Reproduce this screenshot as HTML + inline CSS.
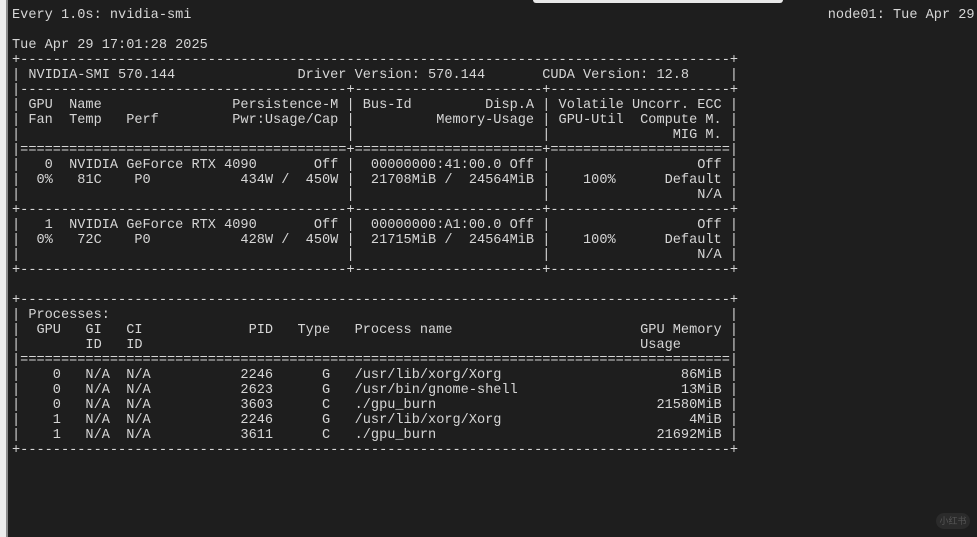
<!DOCTYPE html>
<html><head><meta charset="utf-8"><style>
html,body{margin:0;padding:0}
body{width:977px;height:537px;background:#1e1e1e;position:relative;overflow:hidden;font-family:"Liberation Mono",monospace;font-size:13.6px;color:#d6d6d6}
.side{position:absolute;left:0;top:0;width:6px;height:537px;background:#ececec;border-right:2px solid #8a8a8a}
.topbar{position:absolute;left:533px;top:0;width:250px;height:3px;background:#e8e8e8;border-radius:0 0 4px 4px}
.scr{position:absolute;left:12px;top:8px;width:965px;height:529px;overflow:hidden}
.l{position:relative;height:15px;line-height:15px}
i{position:absolute;top:0;font-style:normal;white-space:pre}
.f{overflow:hidden}
.wm{position:absolute;left:936px;top:513px;width:34px;height:16px;border-radius:8px;background:#2b2b2b;color:#555;font-family:"Noto Sans CJK SC",sans-serif;font-size:9px;line-height:16px;text-align:center}
</style></head><body>
<div class="side"></div><div class="topbar"></div>
<div class="scr">
<div class="l"><i style="left:0">Every 1.0s: nvidia-smi</i><i style="left:100ch">node01: Tue Apr 29</i></div>
<div class="l"></div>
<div class="l"><i style="left:0">Tue Apr 29 17:01:28 2025</i></div>
<div class="l"><i style="left:0">+</i><i class="f" style="left:1ch;width:87ch">----------------------------------------------------------------------------------------------------</i><i style="left:88ch">+</i></div>
<div class="l"><i style="left:0">| NVIDIA-SMI 570.144</i><i style="left:35ch">Driver Version: 570.144</i><i style="left:65ch">CUDA Version: 12.8</i><i style="left:88ch">|</i></div>
<div class="l"><i style="left:0">|</i><i class="f" style="left:1ch;width:40ch">--------------------------------------------------</i><i style="left:41ch">+</i><i class="f" style="left:42ch;width:23ch">------------------------------</i><i style="left:65ch">+</i><i class="f" style="left:66ch;width:22ch">------------------------------</i><i style="left:88ch">+</i></div>
<div class="l"><i style="left:0">| GPU  Name</i><i style="left:27ch">Persistence-M | Bus-Id</i><i style="left:58ch">Disp.A | Volatile Uncorr. ECC |</i></div>
<div class="l"><i style="left:0">| Fan  Temp   Perf</i><i style="left:27ch">Pwr:Usage/Cap |</i><i style="left:52ch">Memory-Usage | GPU-Util  Compute M. |</i></div>
<div class="l"><i style="left:0">|</i><i style="left:41ch">|</i><i style="left:65ch">|</i><i style="left:81ch">MIG M. |</i></div>
<div class="l"><i style="left:0">|</i><i class="f" style="left:1ch;width:40ch">==================================================</i><i style="left:41ch">+</i><i class="f" style="left:42ch;width:23ch">==============================</i><i style="left:65ch">+</i><i class="f" style="left:66ch;width:22ch">==============================</i><i style="left:88ch">|</i></div>
<div class="l"><i style="left:0">|   0  NVIDIA GeForce RTX 4090</i><i style="left:37ch">Off |  00000000:41:00.0 Off |</i><i style="left:84ch">Off |</i></div>
<div class="l"><i style="left:0">|  0%   81C    P0</i><i style="left:28ch">434W /  450W |  21708MiB /  24564MiB |    100%      Default |</i></div>
<div class="l"><i style="left:0">|</i><i style="left:41ch">|</i><i style="left:65ch">|</i><i style="left:84ch">N/A |</i></div>
<div class="l"><i style="left:0">+</i><i class="f" style="left:1ch;width:40ch">--------------------------------------------------</i><i style="left:41ch">+</i><i class="f" style="left:42ch;width:23ch">------------------------------</i><i style="left:65ch">+</i><i class="f" style="left:66ch;width:22ch">------------------------------</i><i style="left:88ch">+</i></div>
<div class="l"><i style="left:0">|   1  NVIDIA GeForce RTX 4090</i><i style="left:37ch">Off |  00000000:A1:00.0 Off |</i><i style="left:84ch">Off |</i></div>
<div class="l"><i style="left:0">|  0%   72C    P0</i><i style="left:28ch">428W /  450W |  21715MiB /  24564MiB |    100%      Default |</i></div>
<div class="l"><i style="left:0">|</i><i style="left:41ch">|</i><i style="left:65ch">|</i><i style="left:84ch">N/A |</i></div>
<div class="l"><i style="left:0">+</i><i class="f" style="left:1ch;width:40ch">--------------------------------------------------</i><i style="left:41ch">+</i><i class="f" style="left:42ch;width:23ch">------------------------------</i><i style="left:65ch">+</i><i class="f" style="left:66ch;width:22ch">------------------------------</i><i style="left:88ch">+</i></div>
<div class="l"></div>
<div class="l"><i style="left:0">+</i><i class="f" style="left:1ch;width:87ch">----------------------------------------------------------------------------------------------------</i><i style="left:88ch">+</i></div>
<div class="l"><i style="left:0">| Processes:</i><i style="left:88ch">|</i></div>
<div class="l"><i style="left:0">|  GPU   GI   CI</i><i style="left:29ch">PID   Type   Process name</i><i style="left:77ch">GPU Memory |</i></div>
<div class="l"><i style="left:0">|        ID   ID</i><i style="left:77ch">Usage</i><i style="left:88ch">|</i></div>
<div class="l"><i style="left:0">|</i><i class="f" style="left:1ch;width:87ch">====================================================================================================</i><i style="left:88ch">|</i></div>
<div class="l"><i style="left:0">|    0   N/A  N/A</i><i style="left:28ch">2246      G   /usr/lib/xorg/Xorg</i><i style="left:82ch">86MiB |</i></div>
<div class="l"><i style="left:0">|    0   N/A  N/A</i><i style="left:28ch">2623      G   /usr/bin/gnome-shell</i><i style="left:82ch">13MiB |</i></div>
<div class="l"><i style="left:0">|    0   N/A  N/A</i><i style="left:28ch">3603      C   ./gpu_burn</i><i style="left:79ch">21580MiB |</i></div>
<div class="l"><i style="left:0">|    1   N/A  N/A</i><i style="left:28ch">2246      G   /usr/lib/xorg/Xorg</i><i style="left:83ch">4MiB |</i></div>
<div class="l"><i style="left:0">|    1   N/A  N/A</i><i style="left:28ch">3611      C   ./gpu_burn</i><i style="left:79ch">21692MiB |</i></div>
<div class="l"><i style="left:0">+</i><i class="f" style="left:1ch;width:87ch">----------------------------------------------------------------------------------------------------</i><i style="left:88ch">+</i></div>
</div>
<div class="wm">小红书</div>
</body></html>
